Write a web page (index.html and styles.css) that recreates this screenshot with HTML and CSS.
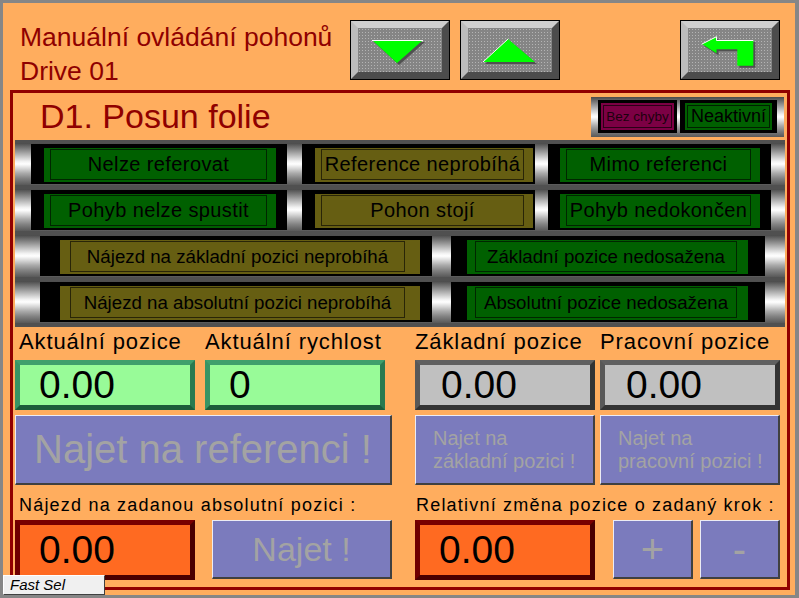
FILE: index.html
```html
<!DOCTYPE html>
<html lang="cs">
<head>
    <meta charset="UTF-8">
    <title>Manuální ovládání pohonů</title>
    <link rel="stylesheet" href="styles.css">
</head>
<body>
<div class="screen">
    <header class="top">
        <div class="title">Manuální ovládání pohonů<br>Drive 01</div>
        <div class="nav-btn">
            <div class="face">
                <svg width="84" height="44" viewBox="0 0 84 44">
                    <polygon points="16,14 67,14 41,37" fill="#505050"/>
                    <polygon points="14,12 65,12 39,35" fill="#00ff00"/>
                    <line x1="14" y1="12.5" x2="65" y2="12.5" stroke="#fff"/>
                </svg>
            </div>
        </div>
        <div class="nav-btn">
            <div class="face">
                <svg width="84" height="44" viewBox="0 0 84 44">
                    <polygon points="42,13 17,36 69,36" fill="#505050"/>
                    <polygon points="40,11 15,34 67,34" fill="#00ff00"/>
                    <line x1="15" y1="34" x2="40" y2="11" stroke="#fff"/>
                </svg>
            </div>
        </div>
        <div class="nav-btn back">
            <div class="face">
                <svg width="84" height="44" viewBox="0 0 84 44">
                    <polygon points="16,18 30.5,10.7 30.5,14 67.3,14 67.3,39.7 51.3,39.7 51.3,23.3 30.5,23.3 30.5,27.3" fill="#505050"/>
                    <polygon points="14,16 28.5,8.7 28.5,12 65.3,12 65.3,37.7 49.3,37.7 49.3,21.3 28.5,21.3 28.5,25.3" fill="#00ff00"/>
                    <polyline points="14,16 28.5,8.7 28.5,12.5 65.3,12.5" fill="none" stroke="#fff"/>
                </svg>
            </div>
        </div>
    </header>

    <section class="panel">
        <div class="panel-head">
            <h1>D1. Posun folie</h1>
            <div class="rail badges">
                <div class="badge-slot first"><div class="badge maroon">Bez chyby</div></div>
                <div class="badge-slot second"><div class="badge green">Neaktivní</div></div>
            </div>
        </div>

        <!-- stavová hlášení -->
        <div class="status">
            <div class="rail row">
                <div class="slot a1"><div class="lamp"><span>Nelze referovat</span></div></div>
                <div class="slot a2"><div class="lamp olive"><span>Reference neprobíhá</span></div></div>
                <div class="slot a3"><div class="lamp"><span>Mimo referenci</span></div></div>
            </div>
            <div class="rail row">
                <div class="slot a1"><div class="lamp"><span>Pohyb nelze spustit</span></div></div>
                <div class="slot a2"><div class="lamp olive"><span>Pohon stojí</span></div></div>
                <div class="slot a3"><div class="lamp"><span>Pohyb nedokončen</span></div></div>
            </div>
            <div class="rail row wide">
                <div class="slot b1"><div class="lamp olive"><span>Nájezd na základní pozici neprobíhá</span></div></div>
                <div class="slot b2"><div class="lamp"><span>Základní pozice nedosažena</span></div></div>
            </div>
            <div class="rail row wide">
                <div class="slot b1"><div class="lamp olive"><span>Nájezd na absolutní pozici neprobíhá</span></div></div>
                <div class="slot b2"><div class="lamp"><span>Absolutní pozice nedosažena</span></div></div>
            </div>
        </div>

        <div class="controls">
            <div class="group-l">
                <div class="labels">
                    <span class="lbl-1">Aktuální pozice</span>
                    <span>Aktuální rychlost</span>
                </div>
                <div class="fields">
                    <div class="field green">0.00</div>
                    <div class="field green">0</div>
                </div>
                <div class="cmd big">Najet na referenci !</div>
                <div class="note">Nájezd na zadanou absolutní pozici :</div>
                <div class="bottom">
                    <div class="field orange">0.00</div>
                    <div class="cmd go">Najet !</div>
                </div>
            </div>
            <div class="group-r">
                <div class="labels">
                    <span class="lbl-1">Základní pozice</span>
                    <span>Pracovní pozice</span>
                </div>
                <div class="fields">
                    <div class="field gray">0.00</div>
                    <div class="field gray">0.00</div>
                </div>
                <div class="fields">
                    <div class="cmd two">Najet na<br>základní pozici !</div>
                    <div class="cmd two">Najet na<br>pracovní pozici !</div>
                </div>
                <div class="note">Relativní změna pozice o zadaný krok :</div>
                <div class="bottom">
                    <div class="field orange">0.00</div>
                    <div class="cmd step plus">+</div>
                    <div class="cmd step">-</div>
                </div>
            </div>
        </div>
    </section>

    <div class="fast-sel">Fast Sel</div>
</div>
</body>
</html>
```

FILE: styles.css
```css
* {
    margin: 0;
    padding: 0;
    box-sizing: border-box;
    font-family: "Liberation Sans", Arial, sans-serif;
}

body {
    background: #ffad5e;
}

.screen {
    position: relative;
    width: 799px;
    height: 598px;
    background: #ffad5e;
    border: 3px solid #868686;
    border-right-width: 4px;
    overflow: hidden;
}

/* hlavička */
.top {
    display: flex;
    align-items: flex-start;
    height: 87px;
    padding: 17px 0 0 17px;
}

.title {
    width: 330px;
    color: #8f0000;
    font-size: 26.5px;
    line-height: 34px;
    white-space: nowrap;
}

.nav-btn {
    width: 100px;
    height: 60px;
    border: 1px solid #000;
}

.nav-btn + .nav-btn {
    margin-left: 10px;
}

.nav-btn.back {
    margin-left: 120px;
}

.face {
    height: 100%;
    border: 7px solid;
    border-color: #cfcfcf #4c4c4c #4c4c4c #bdbdbd;
    background-color: #858585;
    background-image: radial-gradient(circle, #b4b4b4 0.5px, transparent 0.9px);
    background-size: 3px 3px;
}

.face svg {
    display: block;
}

/* panel pohonu */
.panel {
    width: 780px;
    height: 500px;
    margin-left: 7px;
    border: 3px solid #900000;
}

.panel-head {
    display: flex;
    justify-content: space-between;
    height: 47px;
}

.panel-head h1 {
    font-weight: normal;
    font-size: 34px;
    line-height: 40px;
    color: #8f0000;
    margin: 3px 0 0 27px;
}

.rail {
    background: linear-gradient(#4a4a4a 0%, #777 12%, #a6a6a6 24%, #d0d0d0 35%, #f2f2f2 44%, #fff 50%, #dadada 60%, #aaa 72%, #808080 85%, #585858 100%);
}

.badges {
    display: flex;
    align-items: flex-start;
    width: 193px;
    height: 40px;
    margin: 4px 3px 0 0;
}

.badge-slot {
    background: #000;
    height: 33px;
    margin-top: 3px;
    padding: 3px;
}

.badge-slot.first {
    width: 79px;
    margin-left: 7px;
}

.badge-slot.second {
    width: 97px;
    margin-left: 3px;
    padding: 3px 5px;
}

.badge {
    height: 100%;
    display: flex;
    align-items: center;
    justify-content: center;
    white-space: nowrap;
}

.badge.maroon {
    background: #7c0044;
    box-shadow: inset 0 0 0 2px #7c0044, inset 0 0 0 3px #2a0016;
    color: #1c000e;
    font-size: 13.5px;
}

.badge.green {
    background: #006000;
    box-shadow: inset 0 0 0 2px #006000, inset 0 0 0 3px #002000;
    color: #000;
    font-size: 18px;
}

/* stavová hlášení */
.status {
    margin: 0 2px;
    background: #505050;
    padding: 3px 0 4px;
    display: flex;
    flex-direction: column;
    gap: 4px;
}

.row {
    display: flex;
    height: 42px;
    padding: 1px 0;
}

.slot {
    background: #000;
    padding: 4px 11px 2px 13px;
}

.lamp {
    height: 100%;
    padding: 1px 9px 2px 6px;
    background: #006000;
}

.lamp.olive {
    background: #665e12;
}

.lamp span {
    display: flex;
    height: 100%;
    align-items: center;
    justify-content: center;
    border: 1px solid rgba(0, 0, 0, 0.6);
    color: #000;
    font-size: 20px;
    letter-spacing: 0.4px;
    white-space: nowrap;
}

.slot.a1 {
    width: 256px;
    margin-left: 16px;
}

.slot.a2 {
    width: 233px;
    margin-left: 15px;
    padding-right: 2px;
}

.slot.a3 {
    width: 223px;
    margin-left: 13px;
    padding-left: 12px;
}

.wide .lamp span {
    font-size: 18.7px;
    letter-spacing: 0;
}

.slot.b1 {
    width: 392px;
    margin-left: 25px;
    padding: 4px 12px 2px 20px;
}

.slot.b1 .lamp {
    padding: 1px 15px 2px 10px;
}

.slot.b2 {
    width: 314px;
    margin-left: 19px;
    padding: 4px 17px 2px 16px;
}

.slot.b2 .lamp {
    padding: 1px 11px 2px 8px;
}

/* ovládání */
.controls {
    display: flex;
    gap: 23px;
    margin: 3px 0 0 2px;
}

.group-l {
    width: 377px;
}

.group-r {
    width: 365px;
}

.labels {
    display: flex;
    height: 24px;
    font-size: 22px;
    line-height: 24px;
    letter-spacing: 0.9px;
    white-space: nowrap;
}

.group-l .lbl-1 {
    width: 190px;
    padding-left: 4px;
}

.group-r .lbl-1 {
    width: 185px;
}

.fields {
    display: flex;
    gap: 10px;
    margin-top: 6px;
}

.group-r .fields {
    gap: 5px;
}

.group-r .fields + .fields {
    margin-top: 5px;
}

.field {
    display: flex;
    align-items: center;
    width: 180px;
    height: 50px;
    border: 5px solid;
    padding-left: 19px;
    font-size: 39px;
    line-height: 40px;
    color: #000;
}

.field.green {
    background: #98fb98;
    border-color: #3f9f6c #2a7a50 #1d5c3a #389464;
}

.field.gray {
    background: #c0c0c0;
    border-color: #606060 #333 #333 #585858;
    padding-left: 21px;
}

.field.orange {
    height: 60px;
    background: #ff6a21;
    border-color: #7a0000 #4a0000 #4a0000 #700000;
}

.cmd {
    display: flex;
    align-items: center;
    justify-content: center;
    background: #7b7bbd;
    border-style: solid;
    border-width: 1px 2px 2px 1px;
    border-color: #ececf4 #404040 #404040 #ececf4;
    color: #a3a3a3;
    white-space: nowrap;
}

.cmd.big {
    width: 377px;
    height: 70px;
    margin-top: 5px;
    font-size: 40px;
}

.cmd.two {
    width: 180px;
    height: 70px;
    flex-direction: column;
    align-items: flex-start;
    padding-left: 17px;
    font-size: 20px;
    line-height: 23px;
}

.note {
    height: 22px;
    margin-top: 9px;
    padding-left: 4px;
    font-size: 18px;
    line-height: 22px;
    letter-spacing: 1.2px;
    white-space: nowrap;
}

.group-r .note {
    padding-left: 1px;
}

.bottom {
    display: flex;
    align-items: flex-start;
    margin-top: 4px;
}

.cmd.go {
    width: 180px;
    height: 59px;
    margin-left: 17px;
    font-size: 34px;
}

.cmd.step {
    width: 80px;
    height: 59px;
    margin-left: 7px;
    font-size: 40px;
}

.cmd.step.plus {
    margin-left: 18px;
}

.fast-sel {
    position: absolute;
    left: 0;
    top: 572px;
    width: 102px;
    height: 20px;
    background: #f0f0f0;
    border: 1px solid;
    border-color: #fff #404040 #404040 #fff;
    padding-left: 6px;
    font-size: 15px;
    font-style: italic;
    line-height: 18px;
    color: #000;
}
```
